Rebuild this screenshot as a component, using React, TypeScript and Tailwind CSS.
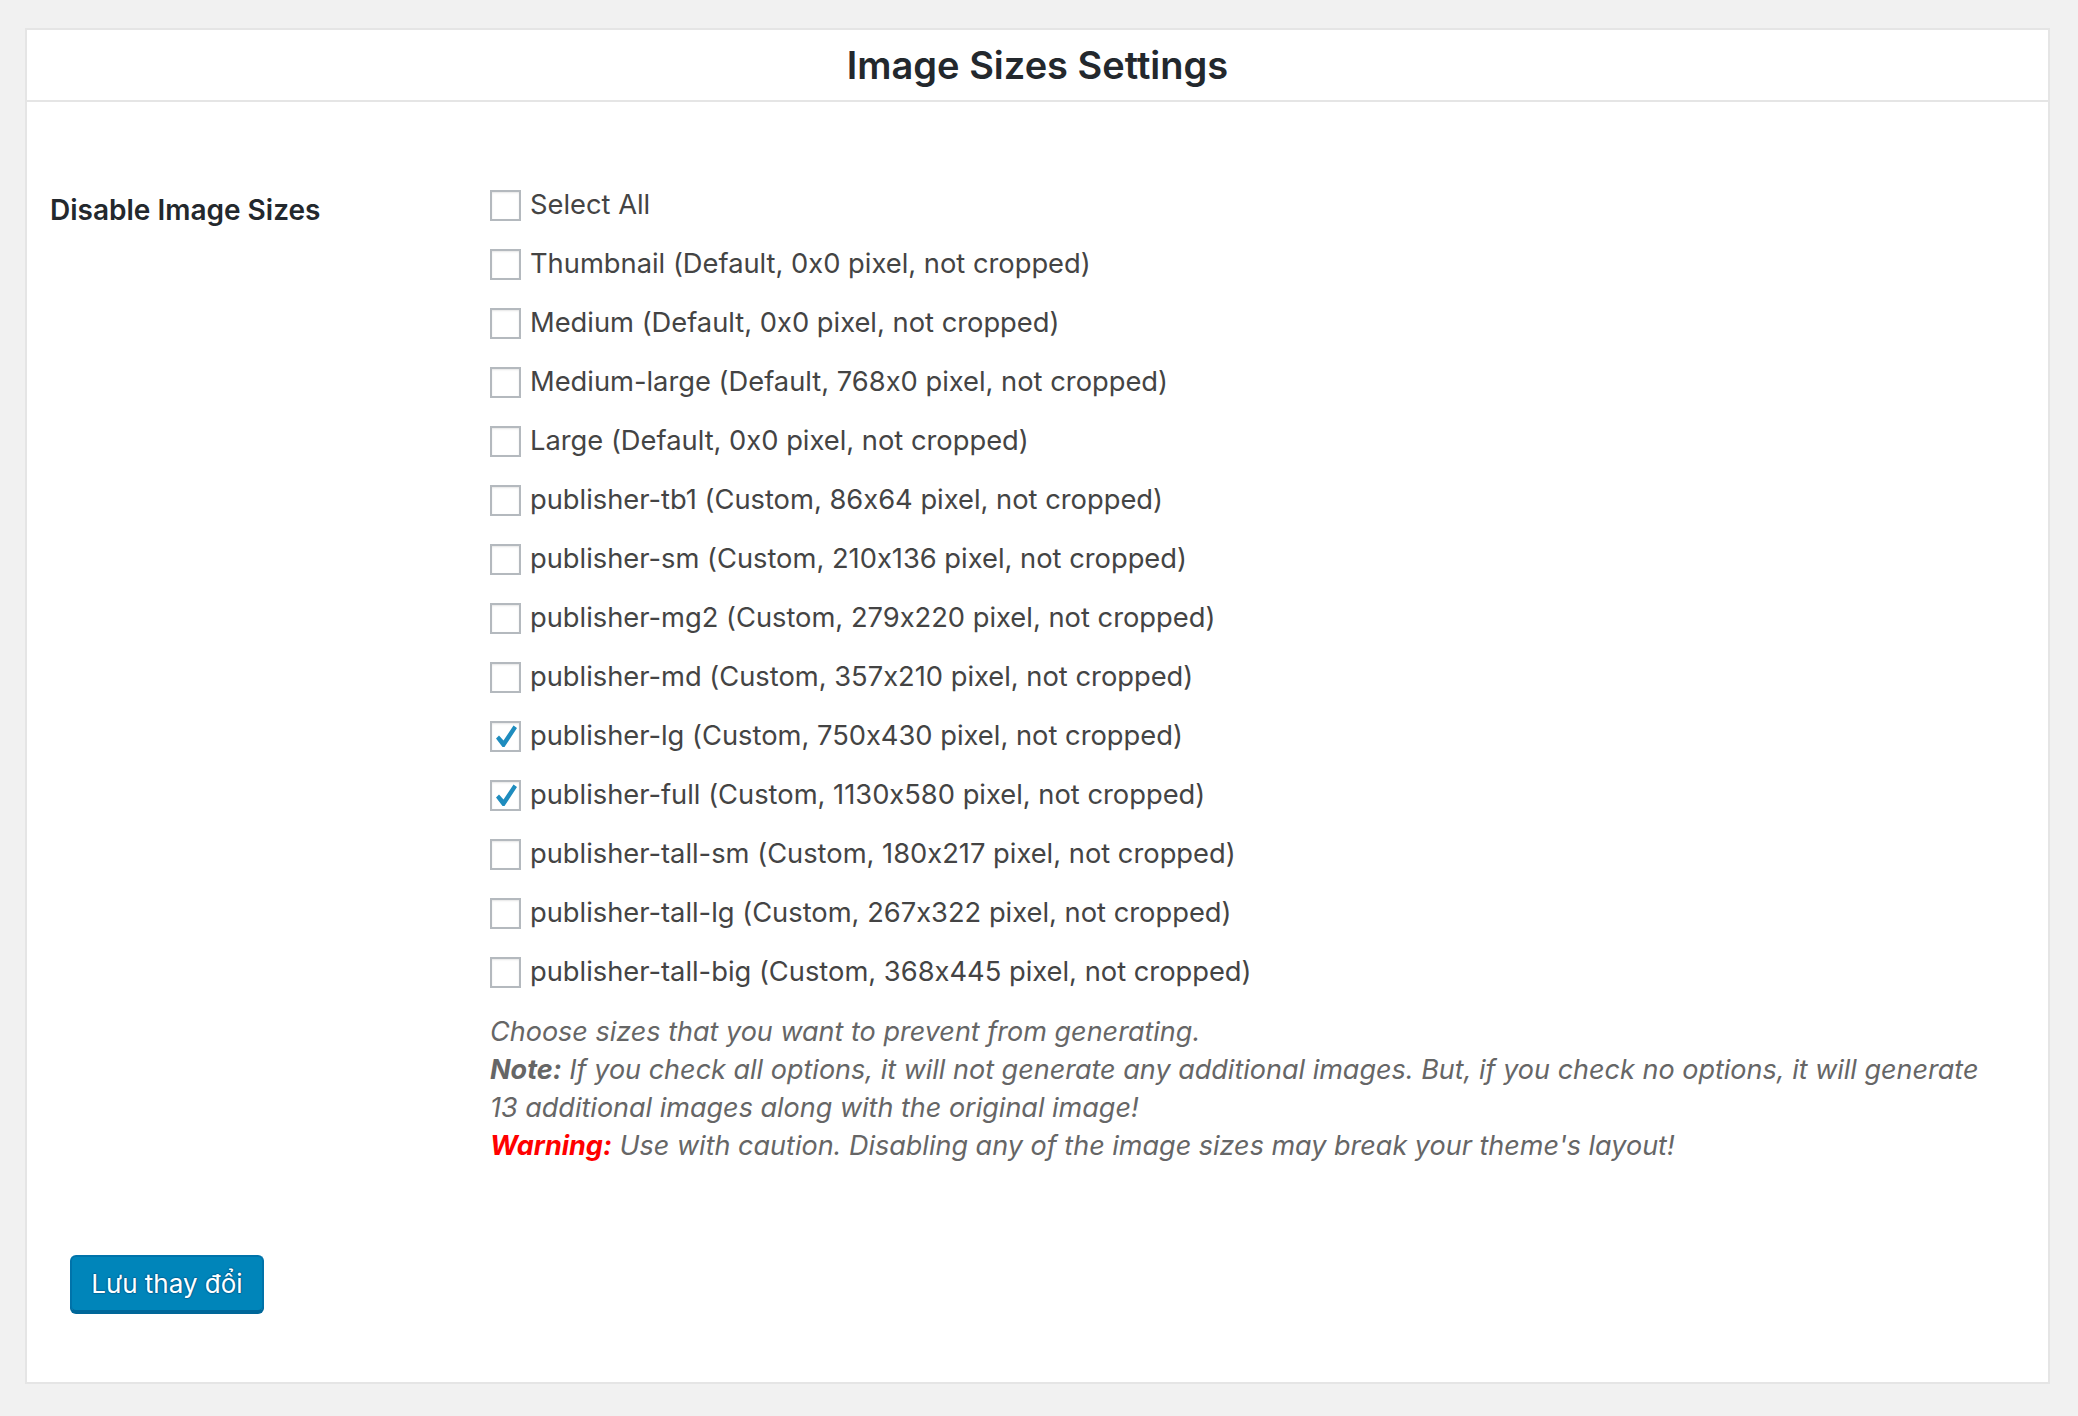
import React from 'react'

const sizes: { label: string; checked?: boolean }[] = [
  { label: 'Select All' },
  { label: 'Thumbnail (Default, 0x0 pixel, not cropped)' },
  { label: 'Medium (Default, 0x0 pixel, not cropped)' },
  { label: 'Medium-large (Default, 768x0 pixel, not cropped)' },
  { label: 'Large (Default, 0x0 pixel, not cropped)' },
  { label: 'publisher-tb1 (Custom, 86x64 pixel, not cropped)' },
  { label: 'publisher-sm (Custom, 210x136 pixel, not cropped)' },
  { label: 'publisher-mg2 (Custom, 279x220 pixel, not cropped)' },
  { label: 'publisher-md (Custom, 357x210 pixel, not cropped)' },
  { label: 'publisher-lg (Custom, 750x430 pixel, not cropped)', checked: true },
  { label: 'publisher-full (Custom, 1130x580 pixel, not cropped)', checked: true },
  { label: 'publisher-tall-sm (Custom, 180x217 pixel, not cropped)' },
  { label: 'publisher-tall-lg (Custom, 267x322 pixel, not cropped)' },
  { label: 'publisher-tall-big (Custom, 368x445 pixel, not cropped)' },
]

const CheckBox = ({ checked }: { checked?: boolean }) => (
  <span className="w-[31px] h-[31px] shrink-0 border-2 border-[#b4b9be] bg-white shadow-[inset_0_1px_2px_rgba(0,0,0,0.1)] flex items-center justify-center">
    {checked && (
      <svg width="24" height="26" viewBox="0 0 24 26">
        <path d="M2 14.5 L5 11.5 L9.5 16.5 L19.5 1.5 L23 4 L10.5 23 L8.5 23 Z" fill="#1e8cbe" />
      </svg>
    )}
  </span>
)

const App = () => {
  return (
    <div className="min-h-[1416px] bg-[#f1f1f1] pt-[28px] pl-[25px] pr-[28px] font-['Inter',sans-serif] [font-feature-settings:'calt'_0]">
      <div className="bg-white border-2 border-[#e5e5e5] h-[1356px] flex flex-col">
        <div className="h-[72px] border-b-2 border-[#e5e5e5] flex items-center justify-center">
          <h1 className="text-[38px] font-semibold text-[#23282d]">Image Sizes Settings</h1>
        </div>

        <div className="flex pl-[23px] pt-[74px]">
          <div className="w-[440px] shrink-0 pt-[14px]">
            <span className="text-[28px] font-semibold text-[#23282d] leading-[40px]">Disable Image Sizes</span>
          </div>
          <div className="flex flex-col">
            {sizes.map((s) => (
              <label key={s.label} className="flex items-center gap-[9px] h-[59px] text-[27.3px] text-[#444]">
                <CheckBox checked={s.checked} />
                <span>{s.label}</span>
              </label>
            ))}
            <div className="mt-[11px] text-[27px] italic text-[#666] leading-[38px] pr-[40px]">
              <p>Choose sizes that you want to prevent from generating.</p>
              <p>
                <b>Note:</b> If you check all options, it will not generate any additional images. But, if you check no options, it will generate 13 additional images along with the original image!
              </p>
              <p>
                <b className="text-[#ff0000]">Warning:</b> Use with caution. Disabling any of the image sizes may break your theme's layout!
              </p>
            </div>
          </div>
        </div>

        <div className="pl-[43px] pt-[90px]">
          <button className="w-[194px] h-[57px] rounded-[6px] bg-[#0085ba] border-2 border-[#0073aa] border-b-[#006799] shadow-[0_2px_0_#006799] text-white text-[26px] [text-shadow:0_-1px_1px_#006799,1px_0_1px_#006799,0_1px_1px_#006799,-1px_0_1px_#006799]">
            Lưu thay đổi
          </button>
        </div>
      </div>
    </div>
  )
}

export default App
